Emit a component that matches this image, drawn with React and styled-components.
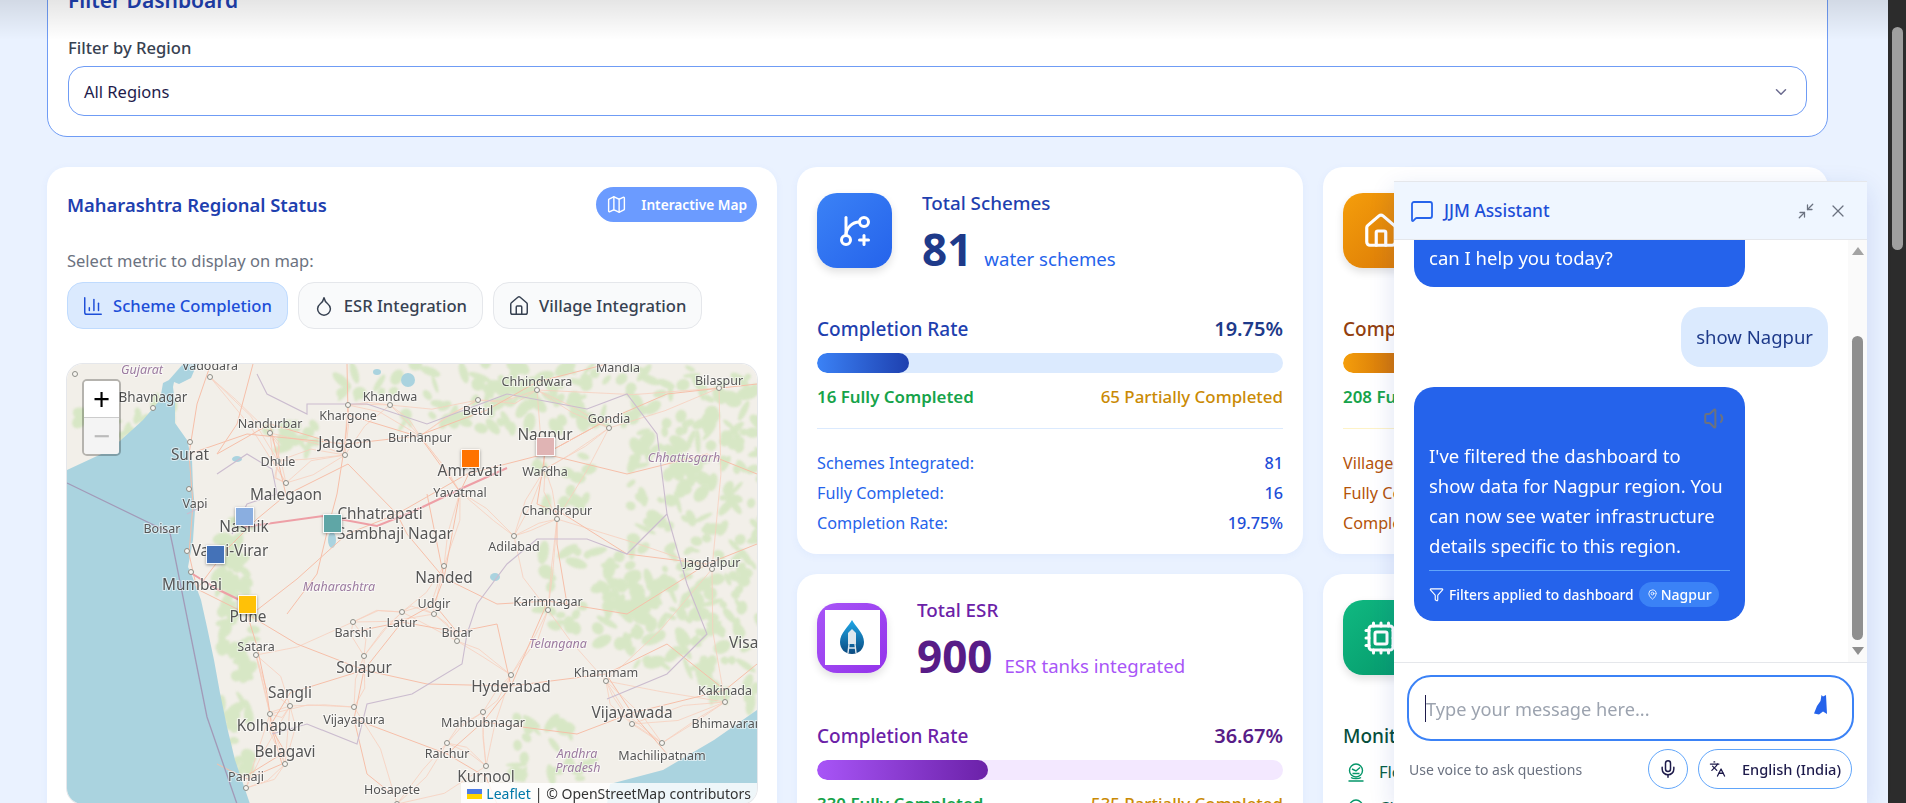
import React from "react";
import styled, { createGlobalStyle } from "styled-components";
import {
  BarChart3,
  ChevronDown,
  Cpu,
  Droplet,
  Filter,
  GitBranchPlus,
  Home,
  Languages,
  Map as MapIcon,
  MapPin,
  MessageSquare,
  Mic,
  Minimize2,
  Volume1,
  X,
} from "lucide-react";

const FONT = `"Noto Sans", "Open Sans", sans-serif`;

const GlobalStyle = createGlobalStyle`
  html, body {
    margin: 0;
    padding: 0;
    height: 100%;
    overflow: hidden;
    background: #eaf2ff;
    font-family: ${FONT};
  }
  * { box-sizing: border-box; }
`;

const BLUE = {
  title: "#1e40af",
  strong: "#1e3a8a",
  sub: "#2563eb",
  from: "#3b82f6",
  to: "#1e40af",
  track: "#dbeafe",
  rowText: "#2563eb",
  rowValue: "#1d4ed8",
  iconFrom: "#3b82f6",
  iconTo: "#2563eb",
};

const PURPLE = {
  title: "#6b21a8",
  strong: "#581c87",
  sub: "#a855f7",
  from: "#a855f7",
  to: "#6b21a8",
  track: "#f3e8ff",
  rowText: "#9333ea",
  rowValue: "#7e22ce",
  iconFrom: "#a855f7",
  iconTo: "#9333ea",
};

const AMBER = {
  title: "#92400e",
  strong: "#78350f",
  sub: "#d97706",
  from: "#f59e0b",
  to: "#b45309",
  track: "#fef3c7",
  rowText: "#b45309",
  rowValue: "#92400e",
  iconFrom: "#f59e0b",
  iconTo: "#d97706",
};

const GREEN = {
  title: "#065f46",
  strong: "#064e3b",
  sub: "#059669",
  iconFrom: "#10b981",
  iconTo: "#059669",
};

// map drawing, coordinates are local to the 690x440 map
const LAND_SEA = [
  "0,106 43,86 76,56 93,36 96,19 108,13 106,23 108,39 108,59 120,76 125,96 126,123 128,146 126,176 121,203 124,209 134,236 140,263 147,296 153,329 160,363 168,396 183,440 0,440",
  "543,420 596,406 647,376 690,346 690,440 540,440",
];

const GULF_TOP = "116,0 130,0 124,14 112,20 102,16";

const LAKES = [
  [265, 176, 4, 8],
  [341, 16, 7, 7],
  [428, 213, 5, 4],
  [310, 8, 4, 3],
  [170, 95, 5, 3],
];

// [cx, cy, spreadX, spreadY, count]
const FOREST_AREAS = [
  [630, 170, 70, 120, 170],
  [590, 260, 60, 50, 50],
  [520, 225, 50, 40, 34],
  [420, 30, 90, 35, 70],
  [560, 30, 60, 30, 34],
  [650, 40, 40, 40, 26],
  [170, 300, 18, 110, 60],
  [165, 200, 14, 40, 18],
  [225, 70, 30, 18, 16],
  [60, 60, 50, 25, 16],
  [485, 385, 40, 35, 26],
  [660, 320, 30, 25, 20],
  [300, 20, 30, 15, 10],
  [500, 120, 30, 30, 14],
];

function seeded(seed) {
  let s = seed;
  return () => {
    s = (s * 16807) % 2147483647;
    return s / 2147483647;
  };
}

const rnd = seeded(4711);
const FOREST_BLOBS = FOREST_AREAS.flatMap(([cx, cy, sx, sy, count]) =>
  Array.from({ length: count }, () => ({
    x: cx + (rnd() * 2 - 1) * sx,
    y: cy + (rnd() * 2 - 1) * sy,
    rx: 3 + rnd() * 9,
    ry: 2 + rnd() * 5,
    rot: rnd() * 180,
  }))
);

const ROADS = [
  "143,2 130,40 122,90 126,140 122,190 130,225 180,250 230,280 297,306 360,320 444,322",
  "181,253 190,282 200,330 205,365 215,400 180,415 150,400",
  "181,253 230,215 280,170 330,150 400,110 478,90 540,56",
  "122,90 180,70 280,80 350,72 420,46 470,18 540,0",
  "280,0 281,50 278,79 270,130 262,160 250,210 220,250",
  "203,60 211,97 219,131 190,155 160,185 130,225",
  "478,90 470,140 490,148 490,180 500,240 481,237 444,322",
  "478,90 540,56 600,30 690,20",
  "478,90 560,110 640,90 690,110",
  "377,214 367,240 335,258 297,306 287,355 300,410 325,430",
  "377,214 340,170 330,150",
  "377,214 430,240 481,237 560,250 640,200 690,180",
  "444,322 416,358 380,390 419,413 430,440",
  "444,322 539,310 565,349 600,390",
  "565,349 658,326 690,300",
  "444,322 430,260 390,268 367,240",
  "297,306 223,329 203,362 218,388 179,412",
  "287,355 380,390",
  "281,51 353,73 393,128 403,107",
  "393,128 377,214 360,130",
  "150,90 203,60 270,80",
  "219,131 281,100 330,150",
  "490,146 560,190 640,200",
  "539,310 600,280 658,326",
  "186,0 170,60 150,90",
  "286,268 335,258 390,268",
  "416,358 510,370 565,349",
];

const TRUNKS = [
  "177,163 256,152 310,162 345,148 400,122 440,104",
  "124,209 150,225 181,240",
];

const BORDERS = [
  "190,10 200,30 240,50 240,40 300,40 360,60 440,30",
  "150,110 180,90 205,105 210,130 180,140 165,170",
  "440,30 520,45 560,30 590,70 600,150",
  "600,150 560,190 520,175 470,175 440,200 410,240 400,270 395,300 345,330 300,340 290,380 240,360 205,370",
  "600,150 620,220 640,270 600,310 540,335",
  "140,140 120,150",
];

const SEA_LINE = "0,119 103,169 106,183 122,263 140,353 170,440";

const CITY_DOTS = [
  [8, 10], [143, 13], [86, 44], [123, 78], [278, 91], [219, 119], [122, 125], [120, 187], [124, 208],
  [377, 202], [444, 311], [297, 292], [203, 350], [565, 360], [218, 400], [419, 402], [645, 205],
  [490, 155], [447, 172], [478, 105], [470, 26], [652, 24], [411, 36], [281, 41], [323, 41],
  [203, 69], [542, 64], [353, 72], [211, 97], [393, 128], [367, 250], [335, 248], [286, 258],
  [390, 277], [189, 291], [223, 342], [287, 343], [416, 348], [380, 379], [481, 246], [539, 317],
  [658, 338], [595, 379], [179, 424], [330, 440],
];

// thin extra roads between neighbouring towns
const TOWN_LINKS = CITY_DOTS.flatMap((a, i) =>
  CITY_DOTS.map((b, j) => ({ b, j, d: Math.hypot(a[0] - b[0], a[1] - b[1]) }))
    .filter((n) => n.j !== i && n.b[0] > 130 && a[0] > 130)
    .sort((m, n) => m.d - n.d)
    .slice(0, 3)
    .map(({ b }) => {
      const mx = (a[0] + b[0]) / 2 + (rnd() - 0.5) * 18;
      const my = (a[1] + b[1]) / 2 + (rnd() - 0.5) * 18;
      return `${a[0]},${a[1]} ${mx},${my} ${b[0]},${b[1]}`;
    })
);

const LABELS = [
  ["Gujarat", 75, 5, "s", true],
  ["Vadodara", 143, 1, "s"],
  ["Mandla", 551, 3, "s"],
  ["Chhindwara", 470, 17, "s"],
  ["Bilaspur", 652, 16, "s"],
  ["Khandwa", 323, 32, "s"],
  ["Bhavnagar", 86, 33, "m"],
  ["Betul", 411, 46, "s"],
  ["Khargone", 281, 51, "s"],
  ["Nandurbar", 203, 59, "s"],
  ["Gondia", 542, 54, "s"],
  ["Nagpur", 478, 71, "l"],
  ["Burhanpur", 353, 73, "s"],
  ["Jalgaon", 278, 79, "l"],
  ["Surat", 123, 91, "l"],
  ["Dhule", 211, 97, "s"],
  ["Chhattisgarh", 617, 93, "s", true],
  ["Amravati", 403, 107, "l"],
  ["Wardha", 478, 107, "s"],
  ["Yavatmal", 393, 128, "s"],
  ["Malegaon", 219, 131, "l"],
  ["Vapi", 128, 139, "s"],
  ["Chandrapur", 490, 146, "s"],
  ["Chhatrapati", 313, 150, "l"],
  ["Nashik", 177, 163, "l"],
  ["Boisar", 95, 164, "s"],
  ["Sambhaji Nagar", 328, 170, "l"],
  ["Adilabad", 447, 182, "s"],
  ["Vasai-Virar", 163, 187, "l"],
  ["Jagdalpur", 645, 198, "s"],
  ["Nanded", 377, 214, "l"],
  ["Mumbai", 125, 221, "l"],
  ["Maharashtra", 272, 222, "s", true],
  ["Udgir", 367, 239, "s"],
  ["Karimnagar", 481, 237, "s"],
  ["Pune", 181, 253, "l"],
  ["Latur", 335, 258, "s"],
  ["Barshi", 286, 268, "s"],
  ["Bidar", 390, 268, "s"],
  ["Visakhapatnam", 718, 279, "l"],
  ["Telangana", 491, 279, "s", true],
  ["Satara", 189, 282, "s"],
  ["Solapur", 297, 304, "l"],
  ["Khammam", 539, 308, "s"],
  ["Hyderabad", 444, 323, "l"],
  ["Sangli", 223, 329, "l"],
  ["Kakinada", 658, 326, "s"],
  ["Vijayawada", 565, 349, "l"],
  ["Vijayapura", 287, 355, "s"],
  ["Kolhapur", 203, 362, "l"],
  ["Mahbubnagar", 416, 358, "s"],
  ["Bhimavaram", 662, 359, "s"],
  ["Belagavi", 218, 388, "l"],
  ["Raichur", 380, 389, "s"],
  ["Machilipatnam", 595, 391, "s"],
  ["Andhra", 510, 389, "s", true],
  ["Pradesh", 511, 403, "s", true],
  ["Panaji", 179, 412, "s"],
  ["Kurnool", 419, 413, "l"],
  ["Hosapete", 325, 425, "s"],
];

const LABEL_SIZE = { s: 12.5, m: 13.5, l: 15.4 };

const MARKERS = [
  { left: 168, top: 143, color: "#8aaee0" },
  { left: 256, top: 150, color: "#5fa6a6" },
  { left: 139, top: 181, color: "#4472b8" },
  { left: 171, top: 231, color: "#ffc107" },
  { left: 394, top: 85, color: "#ff7300" },
  { left: 469, top: 73, color: "#e0b4b4" },
];

function MapDrawing() {
  return (
    <MapSvg viewBox="0 0 690 440">
      <defs>
        <filter id="soft">
          <feGaussianBlur stdDeviation="1.3" />
        </filter>
        <filter id="tile">
          <feGaussianBlur stdDeviation="0.3" />
        </filter>
      </defs>
      <rect width="690" height="440" fill="#f2efe9" />
      <g filter="url(#soft)" fill="#d3e5bf" opacity="0.85">
        {FOREST_BLOBS.map((b, i) => (
          <ellipse key={i} cx={b.x} cy={b.y} rx={b.rx} ry={b.ry} transform={`rotate(${b.rot} ${b.x} ${b.y})`} />
        ))}
      </g>
      <g filter="url(#tile)">
        {LAND_SEA.map((p) => (
          <polygon key={p} points={p} fill="#aad3df" />
        ))}
        <polygon points={GULF_TOP} fill="#aad3df" />
        {LAKES.map(([x, y, rx, ry]) => (
          <ellipse key={`${x}-${y}`} cx={x} cy={y} rx={rx} ry={ry} fill="#aad3df" />
        ))}
        <g fill="none" stroke="#f7cfbe" strokeWidth="0.8">
          {TOWN_LINKS.map((p, i) => (
            <polyline key={i} points={p} />
          ))}
        </g>
        <g fill="none" stroke="#f6bfa9" strokeWidth="1">
          {ROADS.map((p) => (
            <polyline key={p} points={p} />
          ))}
        </g>
        <g fill="none" stroke="#ee9fa6" strokeWidth="2">
          {TRUNKS.map((p) => (
            <polyline key={p} points={p} />
          ))}
        </g>
        <g fill="none" stroke="#cbbccf" strokeWidth="1.1">
          {BORDERS.map((p) => (
            <polyline key={p} points={p} />
          ))}
        </g>
        <polyline points={SEA_LINE} fill="none" stroke="#a29ab8" strokeWidth="1.3" />
        <g fill="#f7f5f0" stroke="#8c8c86" strokeWidth="1">
          {CITY_DOTS.map(([x, y]) => (
            <circle key={`${x}-${y}`} cx={x} cy={y} r="2.5" />
          ))}
        </g>
        {LABELS.map(([name, x, y, size, region]) => (
          <MapLabel
            key={name}
            x={x}
            y={y + 5}
            textAnchor="middle"
            fontSize={LABEL_SIZE[size]}
            fontStyle={region ? "italic" : "normal"}
            fill={region ? "#9c7ba0" : "#555"}
          >
            {name}
          </MapLabel>
        ))}
      </g>
    </MapSvg>
  );
}

function TankLogo() {
  return (
    <svg width="26" height="35" viewBox="0 0 26 35">
      <defs>
        <linearGradient id="tankDrop" x1="0" y1="0" x2="0" y2="1">
          <stop offset="0" stopColor="#1fa8e8" />
          <stop offset="1" stopColor="#0b4a80" />
        </linearGradient>
      </defs>
      <path d="M13 0 C16 6 25 13 25 22 C25 29 20 34 13 34 C6 34 1 29 1 22 C1 13 10 6 13 0Z" fill="url(#tankDrop)" />
      <path d="M9 13 L13 9 L17 13 L17 24 L9 24Z" fill="#dfe8ee" />
      <path d="M10 24 L9 33 M16 24 L17 33 M9.5 28 L16.5 28" stroke="#dfe8ee" strokeWidth="1.4" fill="none" />
    </svg>
  );
}

function MeterIcon() {
  return (
    <svg width="18" height="19" viewBox="0 0 18 19" fill="none" stroke={GREEN.sub} strokeWidth="1.4">
      <circle cx="9" cy="7.5" r="6.5" />
      <path d="M5 6 L9 8 L13 4.5 M5.5 10.5 H12.5" />
      <path d="M4 14.5 C6 16 12 16 14 14.5 M1.5 18 H16.5" />
    </svg>
  );
}

function StatCard({ theme, icon, iconSize = 75, title, value, sub, rate, fully, partly, rows }) {
  return (
    <Card>
      <StatBody>
        <StatHead>
          <IconSlot>
            <IconBox $size={iconSize} $from={theme.iconFrom} $to={theme.iconTo}>
              {icon}
            </IconBox>
          </IconSlot>
          <div>
            <StatTitle $color={theme.title}>{title}</StatTitle>
            <ValueRow>
              <StatValue $color={theme.strong}>{value}</StatValue>
              <StatSub $color={theme.sub}>{sub}</StatSub>
            </ValueRow>
          </div>
        </StatHead>
        <RateRow>
          <RateLabel $color={theme.title}>Completion Rate</RateLabel>
          <RateValue $color={theme.strong}>{rate}%</RateValue>
        </RateRow>
        <Track $color={theme.track}>
          <Fill $from={theme.from} $to={theme.to} style={{ width: `${rate}%` }} />
        </Track>
        <LegendRow>
          <LegendGood>{fully} Fully Completed</LegendGood>
          <LegendPart>{partly} Partially Completed</LegendPart>
        </LegendRow>
        <Rows $line={theme.track}>
          {rows.map(([label, val]) => (
            <Row key={label} $color={theme.rowText}>
              <span>{label}</span>
              <RowValue $color={theme.rowValue}>{val}</RowValue>
            </Row>
          ))}
        </Rows>
      </StatBody>
    </Card>
  );
}

export default function App() {
  return (
    <Page>
      <GlobalStyle />
      <TopShade />
      <Main>
        <FilterPanel>
          <FilterTitle>Filter Dashboard</FilterTitle>
          <FieldLabel>Filter by Region</FieldLabel>
          <SelectBox>
            <span>All Regions</span>
            <ChevronDown size={18} color="#6b6b8f" />
          </SelectBox>
        </FilterPanel>

        <Grid>
          <MapCard>
            <MapHead>
              <MapTitle>Maharashtra Regional Status</MapTitle>
              <MapBadge>
                <MapIcon size={21} strokeWidth={1.6} />
                Interactive Map
              </MapBadge>
            </MapHead>
            <MetricLabel>Select metric to display on map:</MetricLabel>
            <MetricRow>
              <MetricButton $active>
                <BarChart3 size={22} strokeWidth={1.6} />
                Scheme Completion
              </MetricButton>
              <MetricButton>
                <Droplet size={22} strokeWidth={1.6} />
                ESR Integration
              </MetricButton>
              <MetricButton>
                <Home size={22} strokeWidth={1.6} />
                Village Integration
              </MetricButton>
            </MetricRow>
            <MapFrame>
              <MapDrawing />
              {MARKERS.map((m) => (
                <Marker key={m.color} $left={m.left} $top={m.top} $color={m.color} />
              ))}
              <ZoomControl>
                <ZoomIn>+</ZoomIn>
                <ZoomOut>−</ZoomOut>
              </ZoomControl>
              <Attribution>
                <Flag />
                <AttrLink>Leaflet</AttrLink>
                <span>| © OpenStreetMap contributors</span>
              </Attribution>
            </MapFrame>
          </MapCard>

          <StatCard
            theme={BLUE}
            icon={<GitBranchPlus size={36} color="#fff" strokeWidth={2} />}
            title="Total Schemes"
            value="81"
            sub="water schemes"
            rate="19.75"
            fully={16}
            partly={65}
            rows={[
              ["Schemes Integrated:", "81"],
              ["Fully Completed:", "16"],
              ["Completion Rate:", "19.75%"],
            ]}
          />
          <StatCard
            theme={AMBER}
            icon={<Home size={38} color="#fff" strokeWidth={2} />}
            title="Total Villages"
            value="1,053"
            sub="villages"
            rate="19.75"
            fully={208}
            partly={845}
            rows={[
              ["Villages Integrated:", "1,053"],
              ["Fully Completed:", "208"],
              ["Completion Rate:", "19.75%"],
            ]}
          />
          <StatCard
            theme={PURPLE}
            iconSize={70}
            icon={
              <LogoTile>
                <TankLogo />
              </LogoTile>
            }
            title="Total ESR"
            value="900"
            sub="ESR tanks integrated"
            rate="36.67"
            fully={330}
            partly={535}
            rows={[
              ["ESRs Integrated:", "900"],
              ["Fully Completed:", "330"],
              ["Completion Rate:", "36.67%"],
            ]}
          />
          <Card>
            <StatBody>
              <StatHead>
                <IconBox $size={75} $from={GREEN.iconFrom} $to={GREEN.iconTo}>
                  <Cpu size={36} color="#fff" strokeWidth={2} />
                </IconBox>
              </StatHead>
              <MonitorTitle>Monitoring Systems</MonitorTitle>
              <MonitorRow>
                <MeterIcon />
                Flow Meters
              </MonitorRow>
              <MonitorRow>
                <MeterIcon />
                Chlorine Analyzers
              </MonitorRow>
            </StatBody>
          </Card>
        </Grid>
      </Main>

      <PageScrollbar>
        <PageThumb />
      </PageScrollbar>

      <Chat>
        <ChatHead>
          <ChatName>
            <MessageSquare size={24} color="#2563eb" strokeWidth={1.8} />
            JJM Assistant
          </ChatName>
          <ChatTools>
            <Minimize2 size={18} color="#6b7280" strokeWidth={1.7} />
            <X size={20} color="#6b7280" strokeWidth={1.5} />
          </ChatTools>
        </ChatHead>
        <ChatBody>
          <MessageList>
            <BotBubble>Hello! I'm your JJM Assistant. How can I help you today?</BotBubble>
            <UserBubble>show Nagpur</UserBubble>
            <BotBubble $withSpeaker>
              <SpeakerRow>
                <Volume1 size={27} color="#6b7280" strokeWidth={1.8} />
              </SpeakerRow>
              I've filtered the dashboard to show data for Nagpur region. You can now see water
              infrastructure details specific to this region.
              <FilterNote>
                <Filter size={15} strokeWidth={1.8} />
                Filters applied to dashboard
                <RegionChip>
                  <MapPin size={11} strokeWidth={1.8} />
                  Nagpur
                </RegionChip>
              </FilterNote>
            </BotBubble>
          </MessageList>
          <ChatScrollbar>
            <ArrowUp />
            <ChatThumb />
            <ArrowDown />
          </ChatScrollbar>
        </ChatBody>
        <Composer>
          <InputBox>
            <Caret />
            <Placeholder>Type your message here...</Placeholder>
            <SendGlyph width="14" height="20" viewBox="0 0 14 20">
              <path d="M7.5 0 L9 1.5 L12 0 L13 19 L9 16.5 L5 19.5 L0 18.5 L3 11 L6.5 6 Z" fill="#2563eb" />
            </SendGlyph>
          </InputBox>
          <ComposerFoot>
            <VoiceHint>Use voice to ask questions</VoiceHint>
            <FootButtons>
              <MicButton>
                <Mic size={20} color="#1e1b4b" strokeWidth={1.8} />
              </MicButton>
              <LangButton>
                <Languages size={24} color="#1e1b4b" strokeWidth={1.8} />
                English (India)
              </LangButton>
            </FootButtons>
          </ComposerFoot>
        </Composer>
      </Chat>
    </Page>
  );
}

const Page = styled.div`
  position: relative;
  display: flex;
  height: 100vh;
  overflow: hidden;
`;

const TopShade = styled.div`
  position: absolute;
  top: 0;
  left: 0;
  right: 18px;
  height: 40px;
  background: linear-gradient(rgba(0, 0, 0, 0.1), rgba(0, 0, 0, 0));
  z-index: 2;
  pointer-events: none;
`;

const Main = styled.main`
  flex: 1;
  min-width: 0;
  padding: 0 60px 0 47px;
`;

const PageScrollbar = styled.div`
  flex: 0 0 18px;
  background: #2c2c2c;
  padding: 27px 3px 0 4px;
`;

const PageThumb = styled.div`
  height: 223px;
  border-radius: 6px;
  background: #9f9f9f;
`;

const FilterPanel = styled.section`
  margin-top: -34px;
  padding: 19px 20px 20px;
  background: #fff;
  border: 1px solid #6f9cf5;
  border-radius: 20px;
`;

const FilterTitle = styled.h2`
  margin: 0 0 22px;
  font-size: 21px;
  line-height: 28px;
  font-weight: 600;
  color: ${BLUE.title};
`;

const FieldLabel = styled.div`
  font-size: 16.6px;
  line-height: 24px;
  font-weight: 500;
  color: #374151;
  margin-bottom: 6px;
`;

const SelectBox = styled.div`
  display: flex;
  align-items: center;
  justify-content: space-between;
  height: 50px;
  padding: 1px 16px 0 15px;
  border: 1px solid #6f9cf5;
  border-radius: 16px;
  font-size: 16.5px;
  color: #1e1b4b;
`;

const Grid = styled.div`
  display: grid;
  margin-top: 30px;
  grid-template-columns: 730px 506px 505px;
  grid-template-rows: 387px auto;
  gap: 20px;
`;

const Card = styled.div`
  background: #fff;
  border-radius: 20px;
  box-shadow: 0 2px 8px rgba(37, 99, 235, 0.05);
`;

const MapCard = styled(Card)`
  grid-row: span 2;
  padding: 20px;
`;

const MapHead = styled.div`
  display: flex;
  align-items: center;
  justify-content: space-between;
  height: 35px;
`;

const MapTitle = styled.h3`
  margin: 0;
  font-size: 18.4px;
  font-weight: 600;
  color: ${BLUE.title};
`;

const MapBadge = styled.div`
  display: flex;
  align-items: center;
  gap: 14px;
  height: 35px;
  padding: 0 10px;
  border-radius: 18px;
  background: #6b9bff;
  color: #fff;
  font-size: 13.7px;
  font-weight: 600;
`;

const MetricLabel = styled.div`
  margin-top: 27px;
  font-size: 16.5px;
  line-height: 24px;
  color: #6b7280;
`;

const MetricRow = styled.div`
  display: flex;
  gap: 10px;
  margin-top: 9px;
`;

const MetricButton = styled.div`
  display: flex;
  align-items: center;
  gap: 9px;
  height: 47px;
  padding: 0 15px 0 14px;
  border-radius: 16px;
  font-size: 16.6px;
  font-weight: 500;
  border: 1px solid ${(p) => (p.$active ? "#bfdbfe" : "#e5e7eb")};
  background: ${(p) => (p.$active ? "#dbeafe" : "#f9fafb")};
  color: ${(p) => (p.$active ? "#1d4ed8" : "#374151")};
`;

const MapFrame = styled.div`
  position: relative;
  margin-top: 35px;
  height: 440px;
  border-radius: 16px;
  box-shadow: 0 0 0 1px #e5e7eb;
  overflow: hidden;
`;

const MapSvg = styled.svg`
  display: block;
  width: 690px;
  height: 440px;
`;

const MapLabel = styled.text`
  font-family: ${FONT};
  stroke: rgba(255, 255, 255, 0.55);
  stroke-width: 2px;
  paint-order: stroke;
`;

const Marker = styled.div`
  position: absolute;
  left: ${(p) => p.$left}px;
  top: ${(p) => p.$top}px;
  width: 19px;
  height: 19px;
  border: 1.5px solid rgba(255, 255, 255, 0.95);
  background: ${(p) => p.$color};
  box-shadow: 0 1px 3px rgba(0, 0, 0, 0.35);
`;

const ZoomControl = styled.div`
  position: absolute;
  left: 15px;
  top: 15px;
  width: 39px;
  border: 2px solid rgba(0, 0, 0, 0.25);
  border-radius: 5px;
  overflow: hidden;
  background-clip: padding-box;
`;

const ZoomIn = styled.div`
  display: flex;
  align-items: center;
  justify-content: center;
  height: 37px;
  background: #fff;
  color: #000;
  font-size: 30px;
  line-height: 1;
  border-bottom: 1px solid #ccc;
`;

const ZoomOut = styled(ZoomIn)`
  height: 36px;
  background: #f4f4f4;
  color: #bbb;
  border-bottom: 0;
`;

const Attribution = styled.div`
  position: absolute;
  right: 0;
  bottom: 0;
  display: flex;
  align-items: center;
  gap: 4px;
  height: 21px;
  padding: 0 6px;
  background: rgba(255, 255, 255, 0.8);
  font-size: 14px;
  color: #333;
`;

const Flag = styled.span`
  width: 15px;
  height: 10px;
  background: linear-gradient(#4c7be5 50%, #ffd500 50%);
`;

const AttrLink = styled.span`
  color: #0078a8;
`;

const StatBody = styled.div`
  padding: 26px 20px 19px;
`;

const StatHead = styled.div`
  display: flex;
  gap: 30px;
  height: 75px;
`;

const IconSlot = styled.div`
  display: flex;
  align-items: center;
`;

const IconBox = styled.div`
  display: flex;
  align-items: center;
  justify-content: center;
  width: ${(p) => p.$size}px;
  height: ${(p) => p.$size}px;
  border-radius: 20px;
  background: linear-gradient(135deg, ${(p) => p.$from}, ${(p) => p.$to});
  box-shadow: 0 4px 8px rgba(0, 0, 0, 0.12);
`;

const LogoTile = styled.div`
  display: flex;
  align-items: center;
  justify-content: center;
  width: 55px;
  height: 55px;
  background: #fff;
`;

const StatTitle = styled.div`
  margin-top: -2px;
  font-size: 18.8px;
  line-height: 24px;
  font-weight: 500;
  color: ${(p) => p.$color};
`;

const ValueRow = styled.div`
  display: flex;
  align-items: baseline;
  gap: 12px;
  margin-top: 10px;
`;

const StatValue = styled.div`
  font-size: 44px;
  line-height: 48px;
  font-weight: 700;
  color: ${(p) => p.$color};
`;

const StatSub = styled.div`
  font-size: 18.6px;
  color: ${(p) => p.$color};
`;

const RateRow = styled.div`
  display: flex;
  justify-content: space-between;
  margin-top: 49px;
  line-height: 24px;
`;

const RateLabel = styled.span`
  font-size: 19px;
  font-weight: 500;
  color: ${(p) => p.$color};
`;

const RateValue = styled.span`
  font-size: 20px;
  font-weight: 600;
  color: ${(p) => p.$color};
`;

const Track = styled.div`
  height: 20px;
  margin-top: 12px;
  border-radius: 10px;
  background: ${(p) => p.$color};
  overflow: hidden;
`;

const Fill = styled.div`
  height: 100%;
  border-radius: 10px;
  background: linear-gradient(90deg, ${(p) => p.$from}, ${(p) => p.$to});
`;

const LegendRow = styled.div`
  display: flex;
  justify-content: space-between;
  margin-top: 13px;
  font-size: 16.9px;
  line-height: 22px;
`;

const LegendGood = styled.span`
  font-weight: 600;
  color: #16a34a;
`;

const LegendPart = styled.span`
  font-weight: 500;
  color: #ca8a04;
`;

const Rows = styled.div`
  display: flex;
  flex-direction: column;
  gap: 6px;
  margin-top: 20px;
  padding-top: 22px;
  border-top: 1px solid ${(p) => p.$line};
`;

const Row = styled.div`
  display: flex;
  justify-content: space-between;
  font-size: 16.2px;
  line-height: 24px;
  color: ${(p) => p.$color};
`;

const RowValue = styled.span`
  font-weight: 500;
  color: ${(p) => p.$color};
`;

const MonitorTitle = styled.div`
  margin-top: 49px;
  font-size: 19px;
  line-height: 24px;
  font-weight: 500;
  color: ${GREEN.strong};
`;

const MonitorRow = styled.div`
  display: flex;
  align-items: center;
  gap: 14px;
  margin-top: 12px;
  padding-left: 4px;
  font-size: 16.5px;
  line-height: 24px;
  color: ${GREEN.title};
`;

const Chat = styled.aside`
  position: fixed;
  left: 1394px;
  top: 181px;
  bottom: 0;
  width: 473px;
  display: flex;
  flex-direction: column;
  background: #fff;
  box-shadow: 0 8px 24px rgba(30, 64, 175, 0.14);
  z-index: 3;
`;

const ChatHead = styled.header`
  display: flex;
  align-items: center;
  justify-content: space-between;
  height: 59px;
  padding: 0 19px 0 16px;
  background: #eff6ff;
  border-top: 1px solid #e5e7eb;
  border-bottom: 1px solid #e5e7eb;
`;

const ChatName = styled.div`
  display: flex;
  align-items: center;
  gap: 10px;
  font-size: 17.3px;
  font-weight: 500;
  color: #1d4ed8;
`;

const ChatTools = styled.div`
  display: flex;
  align-items: center;
  gap: 13px;
`;

const ChatBody = styled.div`
  flex: 1;
  min-height: 0;
  display: flex;
`;

const MessageList = styled.div`
  flex: 1;
  min-width: 0;
  display: flex;
  flex-direction: column;
  justify-content: flex-end;
  gap: 20px;
  padding: 0 20px 41px;
  overflow: hidden;
`;

const BotBubble = styled.div`
  flex: none;
  width: 331px;
  padding: ${(p) => (p.$withSpeaker ? "20px" : "15px")} 15px 14px;
  border-radius: 20px;
  background: #2563eb;
  color: #fff;
  font-size: 18.5px;
  line-height: 30px;
`;

const UserBubble = styled.div`
  flex: none;
  align-self: flex-end;
  padding: 15px;
  border-radius: 20px;
  background: #dbeafe;
  color: #1e3a8a;
  font-size: 18.5px;
  line-height: 30px;
`;

const SpeakerRow = styled.div`
  display: flex;
  justify-content: flex-end;
  height: 24px;
  margin-top: -2px;
  margin-bottom: 12px;
`;

const FilterNote = styled.div`
  display: flex;
  align-items: center;
  gap: 5px;
  margin-top: 9px;
  padding-top: 11px;
  border-top: 1px solid #60a5fa;
  font-size: 13.8px;
  line-height: 25px;
  font-weight: 500;
  white-space: nowrap;
`;

const RegionChip = styled.span`
  display: flex;
  align-items: center;
  gap: 3px;
  height: 25px;
  padding: 0 7px 0 8px;
  border-radius: 13px;
  background: #3b82f6;
  font-size: 14px;
`;

const ChatScrollbar = styled.div`
  flex: 0 0 19px;
  display: flex;
  flex-direction: column;
  align-items: center;
  padding: 7px 0;
  background: #fafafa;
`;

const ArrowUp = styled.div`
  width: 0;
  height: 0;
  border-left: 6px solid transparent;
  border-right: 6px solid transparent;
  border-bottom: 8px solid #a3a3a3;
`;

const ArrowDown = styled.div`
  width: 0;
  height: 0;
  margin-top: 7px;
  border-left: 6px solid transparent;
  border-right: 6px solid transparent;
  border-top: 8px solid #8f8f8f;
`;

const ChatThumb = styled.div`
  width: 11px;
  height: 304px;
  margin-top: auto;
  border-radius: 6px;
  background: #8f8f8f;
`;

const Composer = styled.div`
  flex: none;
  height: 141px;
  padding: 12px 13px 0;
  border-top: 1px solid #e5e7eb;
`;

const InputBox = styled.div`
  position: relative;
  display: flex;
  align-items: center;
  justify-content: space-between;
  height: 66px;
  padding: 0 24px 0 17px;
  border: 2.5px solid #3b82f6;
  border-radius: 24px;
`;

const Caret = styled.span`
  position: absolute;
  left: 16px;
  top: 18px;
  width: 1px;
  height: 27px;
  background: #1e1b4b;
`;

const Placeholder = styled.span`
  padding-top: 2px;
  font-size: 18.2px;
  color: #9ca3af;
`;

const SendGlyph = styled.svg`
  margin-top: -6px;
`;

const ComposerFoot = styled.div`
  display: flex;
  align-items: center;
  justify-content: space-between;
  margin-top: 8px;
  padding: 0 2px;
`;

const VoiceHint = styled.span`
  font-size: 14px;
  color: #6b7280;
`;

const FootButtons = styled.div`
  display: flex;
  gap: 10px;
`;

const MicButton = styled.div`
  display: flex;
  align-items: center;
  justify-content: center;
  width: 40px;
  height: 40px;
  border: 1px solid #60a5fa;
  border-radius: 50%;
`;

const LangButton = styled.div`
  display: flex;
  align-items: center;
  gap: 16px;
  width: 154px;
  height: 40px;
  padding: 0 10px;
  border: 1px solid #60a5fa;
  border-radius: 20px;
  font-size: 14.6px;
  font-weight: 500;
  color: #1e1b4b;
  white-space: nowrap;
`;
